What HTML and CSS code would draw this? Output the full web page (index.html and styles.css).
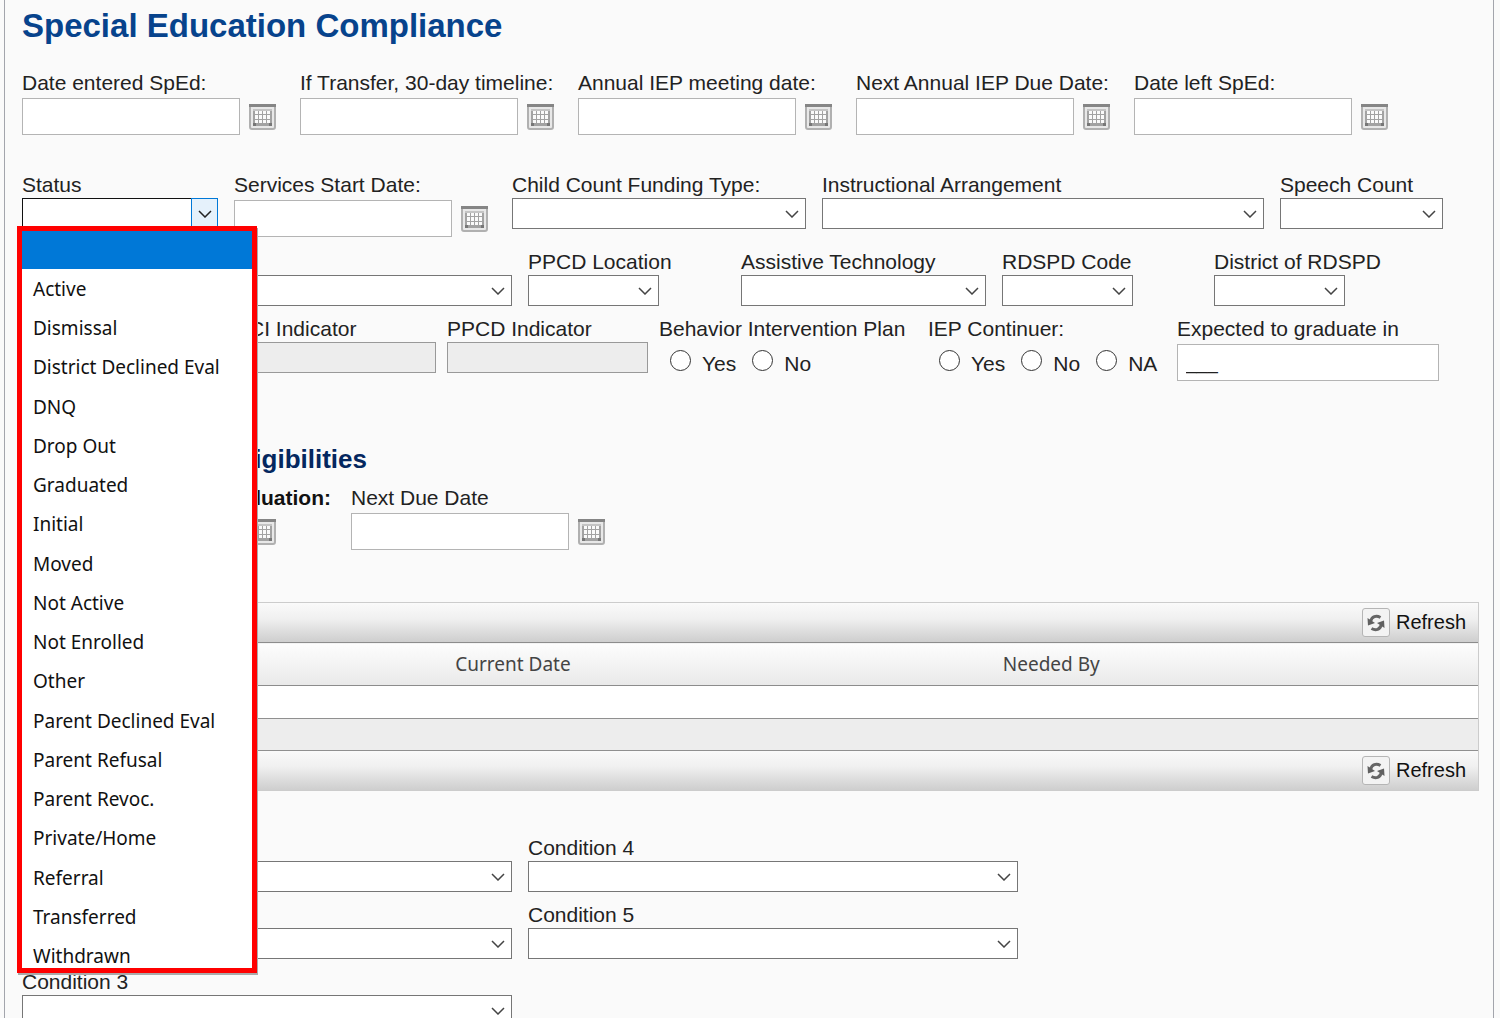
FILE: index.html
```html
<!DOCTYPE html>
<html lang="en">
<head>
<meta charset="utf-8">
<title>Special Education Compliance</title>
<link rel="stylesheet" href="styles.css">
</head>
<body>
<svg class="defs" aria-hidden="true">
  <symbol id="calendar" viewBox="0 0 27 26">
    <rect x="1" y="1" width="25" height="24" rx="2" fill="#e8e8e8" stroke="#b0b0b0" stroke-width="2"/>
    <path d="M0 0h27v3H0z" fill="#858585"/>
    <path d="M4 5h19v17H4z" fill="#a2a2a2"/>
    <path d="M4 5h19v2H4z" fill="#c4c4c4"/>
    <path d="M4 19h3v3H4zM20 19h3v3h-3z" fill="#777"/>
    <path d="M6 7h3v3H6zM10 7h3v3h-3zM14 7h3v3h-3zM18 7h3v3h-3zM6 11h3v4H6zM10 11h3v4h-3zM14 11h3v4h-3zM18 11h3v4h-3zM6 16h3v3H6zM10 16h3v3h-3zM14 16h3v3h-3zM18 16h3v3h-3z" fill="#fafafa"/>
  </symbol>
  <symbol id="refresh" viewBox="0 0 18 18">
    <path d="M3.500 7.500C5 2.500 9 1 13.500 3.500" fill="none" stroke="#666" stroke-width="3"/>
    <path d="M0.500 4L1 11.500L8 9z" fill="#606060"/>
    <path d="M14.500 10.500C13 15.500 9 17 4.500 14.500" fill="none" stroke="#666" stroke-width="3"/>
    <path d="M17.500 14L17 6.500L10 9z" fill="#606060"/>
  </symbol>
</svg>

<main class="panel">
  <h1 class="title">Special Education Compliance</h1>

  <form class="form">
    <div class="row row-dates">
      <div class="field">
        <label class="label" for="entered">Date entered SpEd:</label>
        <div class="date"><input class="input" id="entered" type="text"><button class="cal" type="button" aria-label="Pick date"><svg><use href="#calendar"/></svg></button></div>
      </div>
      <div class="field">
        <label class="label" for="transfer">If Transfer, 30-day timeline:</label>
        <div class="date"><input class="input" id="transfer" type="text"><button class="cal" type="button" aria-label="Pick date"><svg><use href="#calendar"/></svg></button></div>
      </div>
      <div class="field">
        <label class="label" for="annual">Annual IEP meeting date:</label>
        <div class="date"><input class="input" id="annual" type="text"><button class="cal" type="button" aria-label="Pick date"><svg><use href="#calendar"/></svg></button></div>
      </div>
      <div class="field">
        <label class="label" for="next-annual">Next Annual IEP Due Date:</label>
        <div class="date"><input class="input" id="next-annual" type="text"><button class="cal" type="button" aria-label="Pick date"><svg><use href="#calendar"/></svg></button></div>
      </div>
      <div class="field">
        <label class="label" for="left">Date left SpEd:</label>
        <div class="date"><input class="input" id="left" type="text"><button class="cal" type="button" aria-label="Pick date"><svg><use href="#calendar"/></svg></button></div>
      </div>
    </div>

    <div class="row row-status">
      <div class="field">
        <label class="label" for="status">Status</label>
        <div class="combo">
          <select class="select select-open" id="status"><option></option></select>
          <span class="combo-arrow" aria-hidden="true"><svg viewBox="0 0 14 8"><path d="M1 1l6 6l6-6" fill="none" stroke="#222" stroke-width="1.500"/></svg></span>
          <ul class="menu" role="listbox" aria-label="Status">
            <li class="option option-selected" role="option" aria-selected="true"></li>
            <li class="option" role="option">Active</li>
            <li class="option" role="option">Dismissal</li>
            <li class="option" role="option">District Declined Eval</li>
            <li class="option" role="option">DNQ</li>
            <li class="option" role="option">Drop Out</li>
            <li class="option" role="option">Graduated</li>
            <li class="option" role="option">Initial</li>
            <li class="option" role="option">Moved</li>
            <li class="option" role="option">Not Active</li>
            <li class="option" role="option">Not Enrolled</li>
            <li class="option" role="option">Other</li>
            <li class="option" role="option">Parent Declined Eval</li>
            <li class="option" role="option">Parent Refusal</li>
            <li class="option" role="option">Parent Revoc.</li>
            <li class="option" role="option">Private/Home</li>
            <li class="option" role="option">Referral</li>
            <li class="option" role="option">Transferred</li>
            <li class="option" role="option">Withdrawn</li>
          </ul>
        </div>
      </div>
      <div class="field">
        <label class="label" for="services">Services Start Date:</label>
        <div class="date"><input class="input" id="services" type="text"><button class="cal" type="button" aria-label="Pick date"><svg><use href="#calendar"/></svg></button></div>
      </div>
      <div class="field">
        <label class="label" for="funding">Child Count Funding Type:</label>
        <select class="select" id="funding"><option></option></select>
      </div>
      <div class="field">
        <label class="label" for="arrangement">Instructional Arrangement</label>
        <select class="select" id="arrangement"><option></option></select>
      </div>
      <div class="field">
        <label class="label" for="speech">Speech Count</label>
        <select class="select" id="speech"><option></option></select>
      </div>
    </div>

    <div class="row row-codes">
      <div class="field field-bottom">
        <select class="select" id="setting" aria-label="Setting"><option></option></select>
      </div>
      <div class="field">
        <label class="label" for="ppcd-location">PPCD Location</label>
        <select class="select select-short" id="ppcd-location"><option></option></select>
      </div>
      <div class="field">
        <label class="label" for="assistive">Assistive Technology</label>
        <select class="select" id="assistive"><option></option></select>
      </div>
      <div class="field">
        <label class="label" for="rdspd">RDSPD Code</label>
        <select class="select select-short" id="rdspd"><option></option></select>
      </div>
      <div class="field">
        <label class="label" for="rdspd-district">District of RDSPD</label>
        <select class="select select-short" id="rdspd-district"><option></option></select>
      </div>
    </div>

    <div class="row row-indicators">
      <div class="field"></div>
      <div class="field">
        <label class="label" for="eci">ECI Indicator</label>
        <input class="input input-disabled" id="eci" type="text" disabled>
      </div>
      <div class="field">
        <label class="label" for="ppcd">PPCD Indicator</label>
        <input class="input input-disabled" id="ppcd" type="text" disabled>
      </div>
      <div class="field" role="radiogroup" aria-labelledby="bip">
        <span class="label" id="bip">Behavior Intervention Plan</span>
        <div class="radios">
          <label class="radio"><input type="radio" name="bip">Yes</label>
          <label class="radio"><input type="radio" name="bip">No</label>
        </div>
      </div>
      <div class="field" role="radiogroup" aria-labelledby="iep">
        <span class="label" id="iep">IEP Continuer:</span>
        <div class="radios">
          <label class="radio"><input type="radio" name="iep">Yes</label>
          <label class="radio"><input type="radio" name="iep">No</label>
          <label class="radio"><input type="radio" name="iep">NA</label>
        </div>
      </div>
      <div class="field">
        <label class="label" for="graduate">Expected to graduate in</label>
        <div class="date-plain"><input class="input" id="graduate" type="text" value="___"></div>
      </div>
    </div>

    <h2 class="subtitle">Eligibilities</h2>
    <div class="row row-evaluation">
      <div class="field">
        <label class="label label-required" for="evaluation">Evaluation:</label>
        <div class="date"><input class="input" id="evaluation" type="text"><button class="cal" type="button" aria-label="Pick date"><svg><use href="#calendar"/></svg></button></div>
      </div>
      <div class="field">
        <label class="label" for="next-due">Next Due Date</label>
        <div class="date"><input class="input" id="next-due" type="text"><button class="cal" type="button" aria-label="Pick date"><svg><use href="#calendar"/></svg></button></div>
      </div>
    </div>

    <section class="grid">
      <div class="toolbar">
        <button class="refresh" type="button"><span class="refresh-icon"><svg><use href="#refresh"/></svg></span>Refresh</button>
      </div>
      <table class="table">
        <colgroup><col class="col-type"><col class="col-current"><col class="col-needed"></colgroup>
        <thead><tr><th scope="col"></th><th scope="col">Current Date</th><th scope="col">Needed By</th></tr></thead>
        <tbody>
          <tr><td></td><td></td><td></td></tr>
          <tr class="alt"><td></td><td></td><td></td></tr>
        </tbody>
      </table>
      <div class="toolbar">
        <button class="refresh" type="button"><span class="refresh-icon"><svg><use href="#refresh"/></svg></span>Refresh</button>
      </div>
    </section>

    <div class="row row-conditions">
      <div class="field field-bottom">
        <select class="select" id="c1" aria-label="Condition 1"><option></option></select>
      </div>
      <div class="field field-bottom">
        <select class="select" id="c2" aria-label="Condition 2"><option></option></select>
      </div>
      <div class="field">
        <label class="label" for="c3">Condition 3</label>
        <select class="select" id="c3"><option></option></select>
      </div>
      <div class="field">
        <label class="label" for="c4">Condition 4</label>
        <select class="select" id="c4"><option></option></select>
      </div>
      <div class="field">
        <label class="label" for="c5">Condition 5</label>
        <select class="select" id="c5"><option></option></select>
      </div>
    </div>
  </form>
</main>
</body>
</html>
```

FILE: styles.css
```css
* { box-sizing: border-box; }

body {
  margin: 0;
  padding: 0 6px 0 4px;
  background: #fafafa;
  color: #222;
  font-family: "Liberation Sans", Arial, sans-serif;
  font-size: 21px;
}

input, select, button { font: inherit; color: inherit; }

.defs { display: none; }

.panel {
  height: 100vh;
  overflow: hidden auto;
  scrollbar-width: none;
  padding: 6px 14px 0 17px;
  border: solid #a3a5ac;
  border-width: 0 1px;
}

.title {
  margin: 0 0 24px;
  color: #07438c;
  font-size: 33px;
  line-height: 40px;
}

.row { display: grid; column-gap: 16px; }
.row-dates { grid-template-columns: repeat(5, 262fr) 67fr; margin-bottom: 37px; }
.row-status { grid-template-columns: 196fr 262fr 294fr 442fr 163fr 20fr; margin-bottom: 12px; }
.row-codes { grid-template-columns: 490fr 197fr 245fr 196fr 265fr; margin-bottom: 10px; }
.row-indicators { grid-template-columns: 202fr 201fr 201fr 258fr 238fr 262fr 29fr; column-gap: 11px; }
.row-evaluation { grid-template-columns: 313fr 262fr 850fr; margin-bottom: 52px; }
.row-conditions {
  grid-template: repeat(3, auto) / 490fr 490fr 445fr;
  grid-auto-flow: column;
  row-gap: 10px;
  margin: 44px 0;
}

.field { display: flex; flex-direction: column; min-width: 0; }
.field-bottom { justify-content: flex-end; }

.label { line-height: 26px; white-space: nowrap; }
.label-required { padding-right: 4px; color: #111; font-weight: bold; text-align: right; }

.date {
  display: flex;
  align-items: center;
  gap: 9px;
  width: 100%;
  max-width: 262px;
  padding: 2px 8px 0 0;
}
.date-plain { display: flex; padding-top: 2px; }

.input {
  flex: 1;
  min-width: 0;
  height: 37px;
  padding: 0 8px;
  border: 1px solid #b4b4b4;
  border-radius: 0;
  background: #fff;
  font-size: 19px;
}
.input-disabled { flex: none; height: 31px; border-color: #999; background: #ededed; }

.cal { width: 27px; height: 26px; padding: 0; border: 0; background: none; }
.cal svg { display: block; width: 27px; height: 26px; }

.select {
  width: 100%;
  height: 31px;
  border: 1px solid #767676;
  border-radius: 0;
  appearance: none;
  background: #fff url("data:image/svg+xml,%3Csvg xmlns='http://www.w3.org/2000/svg' width='14' height='8'%3E%3Cpath d='M1 1l6 6l6-6' fill='none' stroke='%23444' stroke-width='1.5'/%3E%3C/svg%3E") no-repeat right 6px center;
}
.select-short { width: 131px; }
.select-open { display: block; border-color: #111; background: #fff; }

.combo { position: relative; }
.combo-arrow {
  position: absolute;
  top: 0;
  right: 0;
  display: grid;
  place-items: center;
  width: 27px;
  height: 31px;
  border: 1px solid #0078d7;
  background: #e5f1fb;
}
.combo-arrow svg { width: 14px; height: 8px; }

.menu {
  position: absolute;
  z-index: 1;
  top: 28px;
  left: -5px;
  display: grid;
  grid-template-rows: 38px repeat(17, 1fr) 32px;
  width: 240px;
  height: 747px;
  margin: 0;
  padding: 0;
  overflow: hidden;
  border: 5px solid #f00;
  background: #fff;
  box-shadow: 1px 2px 0 #aaa;
  color: #111;
  font-family: "Noto Sans", "Open Sans", sans-serif;
  font-size: 19px;
  line-height: 39px;
  list-style: none;
}
.option { padding: 1px 0 0 11px; overflow: hidden; }
.option-selected { background: #0078d7; }

.radios { display: flex; gap: 16px; padding: 8px 0 0 11px; }
.radio { display: flex; gap: 11px; line-height: 27px; }
.radio input {
  width: 21px;
  height: 21px;
  margin: 0;
  border: 1px solid #333;
  border-radius: 50%;
  appearance: none;
  background: #fff;
}

.subtitle {
  width: 345px;
  margin: 63px 0 11px;
  color: #04275f;
  font-size: 26px;
  line-height: 30px;
  text-align: right;
}

.grid { border: 1px solid #ccc; }

.toolbar {
  display: flex;
  align-items: center;
  justify-content: flex-end;
  height: 39px;
  padding-right: 12px;
  background: linear-gradient(#fafafa, #f0f0f0 40%, #cecece);
}
.refresh {
  display: flex;
  align-items: center;
  gap: 6px;
  padding: 0;
  border: 0;
  background: none;
  color: #111;
  font-size: 20px;
}
.refresh-icon {
  display: grid;
  place-items: center;
  width: 28px;
  height: 29px;
  border: 1px solid #b5b5b5;
  border-radius: 3px;
  background: #f3f3f3;
}
.refresh-icon svg { width: 18px; height: 18px; }

.table { width: 100%; border-collapse: collapse; table-layout: fixed; background: #fff; }
.col-type { width: 26%; }
.col-current { width: 15%; }
.col-needed { width: 59%; }
.table th {
  height: 43px;
  padding: 0 0 0 5px;
  border: solid #8c8c8c;
  border-width: 1px 0;
  background: linear-gradient(#fdfdfd, #e9e9e9);
  color: #444;
  font-family: "Noto Sans", "Open Sans", sans-serif;
  font-size: 19px;
  font-weight: normal;
}
.table td { height: 33px; padding: 0; border-bottom: 1px solid #909090; }
.table .alt { background: #ededed; }
.table .alt td { height: 32px; }
```
